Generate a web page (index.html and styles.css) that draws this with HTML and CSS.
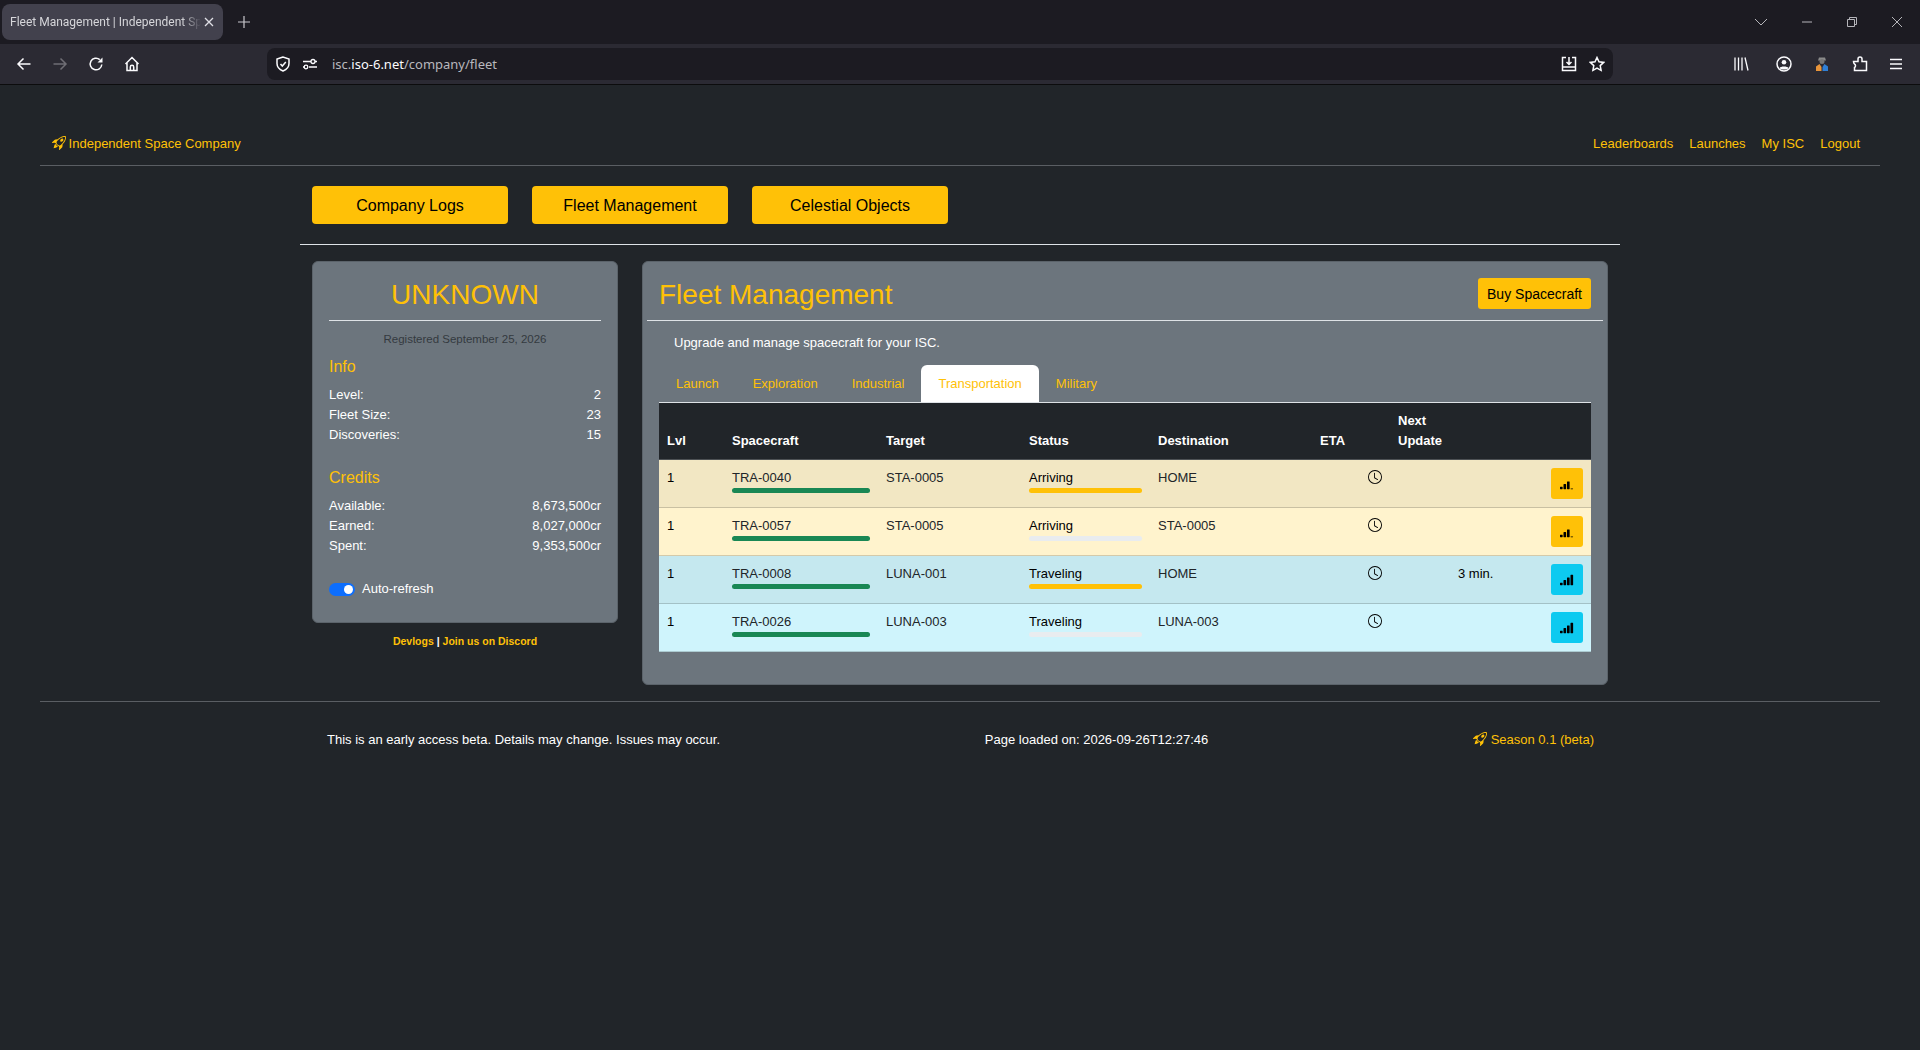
FILE: index.html
```html
<!DOCTYPE html>
<html lang="en">
<head>
  <meta charset="UTF-8">
  <meta name="viewport" content="width=device-width, initial-scale=1.0">
  <title>Fleet Management | Independent Space Company</title>
  <link rel="stylesheet" href="styles.css">
</head>
<body>

  <!-- Icon defs -->
  <svg class="defs" width="0" height="0">
    <symbol id="rocket" viewBox="0 0 16 16">
      <path d="M9.752 6.193c.599.6 1.73.437 2.528-.362s.96-1.932.362-2.531c-.599-.6-1.73-.438-2.528.361-.798.8-.96 1.933-.362 2.532"/>
      <path d="M15.811 3.312c-.363 1.534-1.334 3.626-3.64 6.218l-.24 2.408a2.56 2.56 0 0 1-.732 1.526L8.817 15.85a.51.51 0 0 1-.867-.434l.27-1.899c.04-.28-.013-.593-.131-.956a9 9 0 0 0-.249-.657l-.082-.202c-.815-.197-1.578-.662-2.191-1.277-.614-.615-1.079-1.379-1.275-2.195l-.203-.083a10 10 0 0 0-.655-.248c-.363-.119-.675-.172-.955-.132l-1.896.27A.51.51 0 0 1 .15 7.17l2.382-2.386c.41-.41.947-.67 1.524-.734h.006l2.4-.238C9.005 1.55 11.087.582 12.623.208c.89-.217 1.59-.232 2.08-.188.244.023.435.06.57.093q.1.026.16.045c.184.06.279.13.351.295l.029.073a3.5 3.5 0 0 1 .157.721c.055.485.051 1.178-.159 2.065m-4.828 7.475.04-.04-.107 1.081a1.54 1.54 0 0 1-.44.913l-1.298 1.3.054-.38c.072-.506-.034-.993-.172-1.418a9 9 0 0 0-.164-.45c.738-.065 1.462-.38 2.087-1.006M5.205 5c-.625.626-.94 1.351-1.004 2.09a9 9 0 0 0-.45-.164c-.424-.138-.91-.244-1.416-.172l-.38.054 1.3-1.3c.245-.246.566-.401.91-.44l1.08-.107zm9.406-3.961c-.38-.034-.967-.027-1.746.163-1.558.38-3.917 1.496-6.937 4.521-.62.62-.799 1.34-.687 2.051.107.676.483 1.362 1.048 1.928.564.565 1.25.941 1.924 1.049.71.112 1.429-.067 2.048-.688 3.079-3.083 4.192-5.444 4.556-6.987.183-.771.18-1.345.138-1.713a3 3 0 0 0-.045-.283 3 3 0 0 0-.3-.041Z"/>
      <path d="M7.009 12.139a7.6 7.6 0 0 1-1.804-1.352A7.6 7.6 0 0 1 3.794 8.86c-1.102.992-1.965 5.054-1.839 5.18.125.126 3.936-.896 5.054-1.902Z"/>
    </symbol>
    <symbol id="clock" viewBox="0 0 16 16">
      <path d="M8 3.5a.5.5 0 0 0-1 0V9a.5.5 0 0 0 .252.434l3.5 2a.5.5 0 0 0 .496-.868L8 8.71z"/>
      <path d="M8 16A8 8 0 1 0 8 0a8 8 0 0 0 0 16m7-8A7 7 0 1 1 1 8a7 7 0 0 1 14 0"/>
    </symbol>
    <symbol id="signal-3" viewBox="0 0 16 16">
      <path d="M0 11.5a.5.5 0 0 1 .5-.5h2a.5.5 0 0 1 .5.5v2a.5.5 0 0 1-.5.5h-2a.5.5 0 0 1-.5-.5zm4-3a.5.5 0 0 1 .5-.5h2a.5.5 0 0 1 .5.5v5a.5.5 0 0 1-.5.5h-2a.5.5 0 0 1-.5-.5zm4-3a.5.5 0 0 1 .5-.5h2a.5.5 0 0 1 .5.5v8a.5.5 0 0 1-.5.5h-2a.5.5 0 0 1-.5-.5zm4 8a.5.5 0 0 1 .5-.5h2a.5.5 0 0 1 0 1h-2a.5.5 0 0 1-.5-.5z"/>
    </symbol>
    <symbol id="signal-4" viewBox="0 0 16 16">
      <path d="M0 11.5a.5.5 0 0 1 .5-.5h2a.5.5 0 0 1 .5.5v2a.5.5 0 0 1-.5.5h-2a.5.5 0 0 1-.5-.5zm4-3a.5.5 0 0 1 .5-.5h2a.5.5 0 0 1 .5.5v5a.5.5 0 0 1-.5.5h-2a.5.5 0 0 1-.5-.5zm4-3a.5.5 0 0 1 .5-.5h2a.5.5 0 0 1 .5.5v8a.5.5 0 0 1-.5.5h-2a.5.5 0 0 1-.5-.5zm4-3a.5.5 0 0 1 .5-.5h2a.5.5 0 0 1 .5.5v11a.5.5 0 0 1-.5.5h-2a.5.5 0 0 1-.5-.5z"/>
    </symbol>
  </svg>

  <!-- Browser tab strip -->
  <div class="tabstrip">
    <div class="browser-tab">
      <span class="tab-title">Fleet Management | Independent Space Company</span>
      <svg class="tab-close" width="12" height="12" viewBox="0 0 12 12"><path d="M2 2l8 8M10 2l-8 8"/></svg>
    </div>
    <svg class="ico new-tab" width="16" height="16" viewBox="0 0 16 16"><path d="M8 2v12M2 8h12"/></svg>
    <div class="window-controls">
      <svg class="ico win" width="14" height="14" viewBox="0 0 14 14"><path d="M1 4l6 6 6-6"/></svg>
      <svg class="ico win" width="12" height="12" viewBox="0 0 12 12"><path d="M1 6h10"/></svg>
      <svg class="ico win" width="12" height="12" viewBox="0 0 12 12"><path d="M1.5 3.5h7v7h-7zM3.5 3.5v-2h7v7h-2"/></svg>
      <svg class="ico win" width="12" height="12" viewBox="0 0 12 12"><path d="M1 1l10 10M11 1L1 11"/></svg>
    </div>
  </div>

  <!-- Browser toolbar -->
  <div class="toolbar">
    <div class="nav-buttons">
      <svg class="ico" width="16" height="16" viewBox="0 0 16 16"><path d="M14.5 8H2M7.5 2.5L2 8l5.5 5.5"/></svg>
      <svg class="ico dim" width="16" height="16" viewBox="0 0 16 16"><path d="M1.5 8H14M8.5 2.5L14 8l-5.5 5.5"/></svg>
      <svg class="ico" width="16" height="16" viewBox="0 0 16 16"><path d="M13.8 8.500a5.800 5.800 0 1 1-2-4.900"/><path class="solid" d="M14.500 1.500v5h-5z"/></svg>
      <svg class="ico" width="16" height="16" viewBox="0 0 16 16"><path d="M1.500 8L8 1.500 14.500 8M3 7v7.500h10V7M6.300 14.500V11a1.700 1.700 0 0 1 3.400 0v3.500"/></svg>
    </div>
    <div class="urlbar">
      <svg class="ico" width="16" height="16" viewBox="0 0 16 16"><path d="M8 1L2 3v4.500c0 3.500 2.500 6 6 7.500 3.500-1.500 6-4 6-7.500V3zM5.500 8L7.300 10 10.800 6"/></svg>
      <svg class="ico thin" width="16" height="16" viewBox="0 0 16 16"><path d="M1 5.500h8M13 5.500h2M1 11h2M7 11h8"/><circle cx="11" cy="5.500" r="2"/><circle cx="4" cy="11" r="1.800"/></svg>
      <span class="url">isc.<b>iso-6.net</b>/company/fleet</span>
      <div class="url-actions">
        <svg class="ico" width="16" height="16" viewBox="0 0 16 16"><path d="M5 1.500H1.500v13h13v-13H11M1.500 11h13M8 1v7M5.500 6L8 8.500 10.500 6"/></svg>
        <svg class="ico" width="16" height="16" viewBox="0 0 16 16"><path d="M8 1.500l2 4.300 4.700.6-3.500 3.200.9 4.700L8 12l-4.100 2.300.9-4.700L1.300 6.400 6 5.800z"/></svg>
      </div>
    </div>
    <div class="tool-icons">
      <svg class="ico thin library" width="16" height="16" viewBox="0 0 16 16"><path d="M2 1.500v13M5.500 1.500v13M9 1.500v13M12 1.500l3 13"/></svg>
      <svg class="ico" width="16" height="16" viewBox="0 0 16 16"><circle cx="8" cy="8" r="7"/><circle cx="8" cy="6.300" r="2.300" class="solid"/><path class="solid" d="M3.500 12c1-2 8-2 9 0-1.500 2-7.500 2-9 0z"/></svg>
      <svg width="16" height="16" viewBox="0 0 16 16"><path d="M4 4.500h8L11 1.500H5z" fill="#8a8a8a"/><circle cx="8" cy="5.500" r="2.500" fill="#777"/><path d="M2 15v-4.500l3.500-2.500 2 3v4z" fill="#e8943a"/><path d="M14 15v-4.500L10.500 8l-2 3v4z" fill="#2f7fd6"/></svg>
      <svg class="ico" width="16" height="16" viewBox="0 0 16 16"><path d="M1.500 5.500H6V3a2 2 0 0 1 4 0v2.500h4.500v9h-12v-3a2 2 0 0 0 0-3.500Q1.500 7 1.500 5.500z"/></svg>
      <svg class="ico menu" width="16" height="16" viewBox="0 0 16 16"><path d="M2 3.500h12M2 8h12M2 12.500h12"/></svg>
    </div>
  </div>

  <div class="page">

    <!-- Site nav -->
    <div class="site-nav">
      <a href="#" class="brand"><svg class="bi" width="14" height="14"><use href="#rocket"/></svg> Independent Space Company</a>
      <div class="nav-links">
        <a href="#">Leaderboards</a>
        <a href="#">Launches</a>
        <a href="#">My ISC</a>
        <a href="#">Logout</a>
      </div>
    </div>

    <div class="container">
      <div class="section-buttons">
        <a href="#" class="btn-main">Company Logs</a>
        <a href="#" class="btn-main">Fleet Management</a>
        <a href="#" class="btn-main">Celestial Objects</a>
      </div>

      <div class="columns">

        <!-- Company summary -->
        <div class="side-col">
          <div class="card side-card">
            <h3 class="company-name">UNKNOWN</h3>
            <div class="rule"></div>
            <div class="registered">Registered September 25, 2026</div>

            <h5 class="side-heading">Info</h5>
            <div class="stat"><span>Level:</span><span>2</span></div>
            <div class="stat"><span>Fleet Size:</span><span>23</span></div>
            <div class="stat"><span>Discoveries:</span><span>15</span></div>

            <h5 class="side-heading credits">Credits</h5>
            <div class="stat"><span>Available:</span><span>8,673,500cr</span></div>
            <div class="stat"><span>Earned:</span><span>8,027,000cr</span></div>
            <div class="stat"><span>Spent:</span><span>9,353,500cr</span></div>

            <div class="auto-refresh">
              <span class="switch"><span class="knob"></span></span>
              Auto-refresh
            </div>
          </div>
          <div class="side-links"><a href="#">Devlogs</a> | <a href="#">Join us on Discord</a></div>
        </div>

        <!-- Fleet -->
        <div class="card fleet-card">
          <div class="fleet-head">
            <h3 class="fleet-title">Fleet Management</h3>
            <a href="#" class="btn-buy">Buy Spacecraft</a>
          </div>
          <div class="rule wide"></div>
          <p class="fleet-intro">Upgrade and manage spacecraft for your ISC.</p>

          <div class="tabs">
            <a href="#" class="tab">Launch</a>
            <a href="#" class="tab">Exploration</a>
            <a href="#" class="tab">Industrial</a>
            <a href="#" class="tab active">Transportation</a>
            <a href="#" class="tab">Military</a>
          </div>

          <table class="fleet-table">
            <colgroup>
              <col class="c-lvl"><col class="c-craft"><col class="c-target"><col class="c-status"><col class="c-dest"><col class="c-eta"><col class="c-next"><col class="c-time"><col class="c-act">
            </colgroup>
            <thead>
              <tr>
                <th>Lvl</th><th>Spacecraft</th><th>Target</th><th>Status</th><th>Destination</th><th>ETA</th><th>Next Update</th><th></th><th></th>
              </tr>
            </thead>
            <tbody>
              <tr class="row-warn-dark">
                <td>1</td>
                <td class="muted">TRA-0040<div class="bar green"></div></td>
                <td class="muted">STA-0005</td>
                <td>Arriving<div class="bar amber"></div></td>
                <td class="muted">HOME</td>
                <td class="eta"><svg class="bi" width="14" height="14"><use href="#clock"/></svg></td>
                <td></td><td></td>
                <td><a href="#" class="btn-signal amber-btn"><svg class="bi" width="14" height="14"><use href="#signal-3"/></svg></a></td>
              </tr>
              <tr class="row-warn">
                <td>1</td>
                <td class="muted">TRA-0057<div class="bar green"></div></td>
                <td class="muted">STA-0005</td>
                <td>Arriving<div class="bar"></div></td>
                <td class="muted">STA-0005</td>
                <td class="eta"><svg class="bi" width="14" height="14"><use href="#clock"/></svg></td>
                <td></td><td></td>
                <td><a href="#" class="btn-signal amber-btn"><svg class="bi" width="14" height="14"><use href="#signal-3"/></svg></a></td>
              </tr>
              <tr class="row-info-dark">
                <td>1</td>
                <td class="muted">TRA-0008<div class="bar green"></div></td>
                <td class="muted">LUNA-001</td>
                <td>Traveling<div class="bar amber"></div></td>
                <td class="muted">HOME</td>
                <td class="eta"><svg class="bi" width="14" height="14"><use href="#clock"/></svg></td>
                <td></td><td>3 min.</td>
                <td><a href="#" class="btn-signal cyan-btn"><svg class="bi" width="14" height="14"><use href="#signal-4"/></svg></a></td>
              </tr>
              <tr class="row-info">
                <td>1</td>
                <td class="muted">TRA-0026<div class="bar green"></div></td>
                <td class="muted">LUNA-003</td>
                <td>Traveling<div class="bar"></div></td>
                <td class="muted">LUNA-003</td>
                <td class="eta"><svg class="bi" width="14" height="14"><use href="#clock"/></svg></td>
                <td></td><td></td>
                <td><a href="#" class="btn-signal cyan-btn"><svg class="bi" width="14" height="14"><use href="#signal-4"/></svg></a></td>
              </tr>
            </tbody>
          </table>
        </div>

      </div>
    </div>

    <!-- Footer -->
    <div class="site-footer">
      <div class="footer-row">
        <span>This is an early access beta. Details may change. Issues may occur.</span>
        <span>Page loaded on: 2026-09-26T12:27:46</span>
        <a href="#"><svg class="bi" width="14" height="14"><use href="#rocket"/></svg> Season 0.1 (beta)</a>
      </div>
    </div>

  </div>

</body>
</html>
```

FILE: styles.css
```css
/* Reset & base */
* {
  margin: 0;
  padding: 0;
  box-sizing: border-box;
}

body {
  font-family: "Liberation Sans", Arial, sans-serif;
  font-size: 13px;
  line-height: 20px;
  background: #212529;
  color: #fff;
}

a {
  color: #ffc107;
  text-decoration: none;
}

.defs {
  position: absolute;
}

.bi {
  fill: currentColor;
  vertical-align: -2px;
}

/* Browser chrome */
.ico {
  fill: none;
  stroke: #fbfbfe;
  stroke-width: 1.5;
  flex: none;
}

.ico.dim {
  stroke: #6f6e75;
}

.ico.thin {
  stroke-width: 1.3;
}

.ico .solid {
  fill: #fbfbfe;
  stroke: none;
}

.tabstrip {
  height: 44px;
  background: #1c1b22;
  display: flex;
  align-items: center;
  padding: 0 17px 0 2px;
}

.browser-tab {
  width: 221px;
  height: 36px;
  background: #42414d;
  border-radius: 8px;
  display: flex;
  align-items: center;
  padding: 0 8px 0 8px;
  font-family: Roboto, sans-serif;
  font-size: 12px;
  color: #d6d6da;
}

.tab-title {
  flex: 1;
  white-space: nowrap;
  overflow: hidden;
  -webkit-mask-image: linear-gradient(to right, #000 90%, transparent);
  mask-image: linear-gradient(to right, #000 90%, transparent);
}

.tab-close {
  fill: none;
  stroke: #e0e0e6;
  stroke-width: 1.3;
  margin-left: 2px;
}

.new-tab {
  margin-left: 13px;
  stroke-width: 1.2;
  stroke: #c8c8ce;
}

.window-controls {
  margin-left: auto;
  display: flex;
  align-items: center;
  gap: 33px;
}

.ico.win {
  stroke: #b5b5ba;
  stroke-width: 1;
}

.toolbar {
  height: 41px;
  background: #2b2a33;
  border-bottom: 1px solid #0c0c0d;
  display: flex;
  align-items: center;
  padding: 0 16px;
}

.nav-buttons {
  display: flex;
  gap: 20px;
  width: 251px;
}

.urlbar {
  width: 1346px;
  height: 32px;
  background: #1c1b22;
  border-radius: 8px;
  display: flex;
  align-items: center;
  gap: 11px;
  padding: 0 8px;
}

.url {
  margin-left: 3px;
  font-family: "Noto Sans", sans-serif;
  font-size: 13px;
  color: #b8b8bd;
}

.url b {
  font-weight: normal;
  color: #fbfbfe;
}

.url-actions {
  margin-left: auto;
  display: flex;
  gap: 12px;
}

.tool-icons {
  margin-left: auto;
  display: flex;
  gap: 22px;
}

.tool-icons .library {
  margin-right: 5px;
}

.tool-icons .menu {
  margin-left: -2px;
}

/* Site nav */
.site-nav {
  margin: 49px 40px 0;
  height: 32px;
  padding: 0 20px 11px 12px;
  border-bottom: 1px solid #5a5e63;
  display: flex;
  justify-content: space-between;
  align-items: center;
}

.brand .bi {
  margin-right: -1px;
}

.nav-links {
  display: flex;
  gap: 16px;
}

.container {
  width: 1320px;
  margin: 0 auto;
}

.section-buttons {
  display: flex;
  gap: 24px;
  padding: 20px 12px 20px;
  border-bottom: 1px solid #dee2e6;
}

.btn-main {
  width: 196px;
  height: 38px;
  background: #ffc107;
  color: #000;
  font-size: 16px;
  line-height: 40px;
  text-align: center;
  border-radius: 4px;
}

.columns {
  display: grid;
  grid-template-columns: 306px 966px;
  gap: 24px;
  padding: 16px 12px 0;
  align-items: start;
}

.card {
  background: #6c757d;
  border: 1px solid #5b636a;
  border-radius: 6px;
}

.rule {
  height: 1px;
  background: #dee2e6;
}

/* Left card */
.side-card {
  padding: 17px 16px 22px;
  height: 362px;
}

.company-name {
  font-size: 28px;
  font-weight: normal;
  line-height: 32px;
  text-align: center;
  color: #ffc107;
  margin-bottom: 9px;
}

.registered {
  margin-top: 10px;
  font-size: 11.5px;
  line-height: 16px;
  text-align: center;
  color: #343a40;
}

.side-heading {
  font-size: 16px;
  font-weight: normal;
  color: #ffc107;
  margin: 10px 0 8px;
}

.side-heading.credits {
  margin-top: 23px;
}

.stat {
  display: flex;
  justify-content: space-between;
}

.auto-refresh {
  display: flex;
  align-items: center;
  gap: 7px;
  margin-top: 23px;
}

.switch {
  width: 26px;
  height: 13px;
  background: #0d6efd;
  border-radius: 7px;
  display: flex;
  justify-content: flex-end;
  align-items: center;
  padding-right: 2px;
}

.knob {
  width: 9px;
  height: 9px;
  background: #fff;
  border-radius: 50%;
}

.side-links {
  margin-top: 8px;
  font-size: 10.5px;
  font-weight: bold;
  text-align: center;
}

/* Fleet card */
.fleet-card {
  padding: 16px 16px 32px;
}

.fleet-head {
  display: flex;
  justify-content: space-between;
  align-items: center;
  height: 31px;
  margin-bottom: 11px;
}

.fleet-title {
  font-size: 28px;
  font-weight: normal;
  padding-top: 2px;
  color: #ffc107;
}

.btn-buy {
  width: 113px;
  height: 31px;
  background: #ffc107;
  color: #000;
  font-size: 14px;
  line-height: 33px;
  text-align: center;
  border-radius: 3px;
}

.rule.wide {
  margin: 0 -12px;
}

.fleet-intro {
  margin: 12px 0 12px;
  padding-left: 15px;
}

.tabs {
  display: flex;
  border-bottom: 1px solid #dee2e6;
}

.tab {
  padding: 8px 16px;
  border: 1px solid transparent;
  border-bottom: 0;
  border-radius: 6px 6px 0 0;
}

.tab.active {
  background: #fff;
}

/* Table */
.fleet-table {
  width: 932px;
  table-layout: fixed;
  border-collapse: collapse;
  color: #000;
}

.c-lvl { width: 65px; }
.c-craft { width: 154px; }
.c-target { width: 143px; }
.c-status { width: 129px; }
.c-dest { width: 162px; }
.c-eta { width: 78px; }
.c-next { width: 60px; }
.c-time { width: 93px; }
.c-act { width: 48px; }

.fleet-table th {
  background: #212529;
  color: #fff;
  font-weight: bold;
  text-align: left;
  vertical-align: bottom;
  padding: 8px;
  border-bottom: 1px solid #4d5154;
}

.fleet-table td {
  padding: 8px;
  vertical-align: top;
  border-bottom: 1px solid rgba(0, 0, 0, 0.17);
}

.muted {
  color: #212529;
}

.row-warn-dark td { background: #f2e7c3; }
.row-warn td { background: #fff3cd; }
.row-info-dark td { background: #c5e8ef; }
.row-info td { background: #cff4fc; }

.eta {
  text-align: right;
}

.bar {
  height: 5px;
  background: #e9ecef;
  border-radius: 3px;
}

.bar.green {
  background: #198754;
}

.bar.amber {
  background: #ffc107;
}

.btn-signal {
  display: flex;
  align-items: center;
  justify-content: center;
  width: 32px;
  height: 31px;
  border-radius: 3px;
  color: #000;
}

.amber-btn {
  background: #ffc107;
}

.cyan-btn {
  background: #0dcaf0;
}

/* Footer */
.site-footer {
  margin: 16px 40px 0;
  border-top: 1px solid #5a5e63;
  padding-top: 28px;
}

.footer-row {
  width: 1267px;
  margin-left: 287px;
  display: flex;
  justify-content: space-between;
}
```
